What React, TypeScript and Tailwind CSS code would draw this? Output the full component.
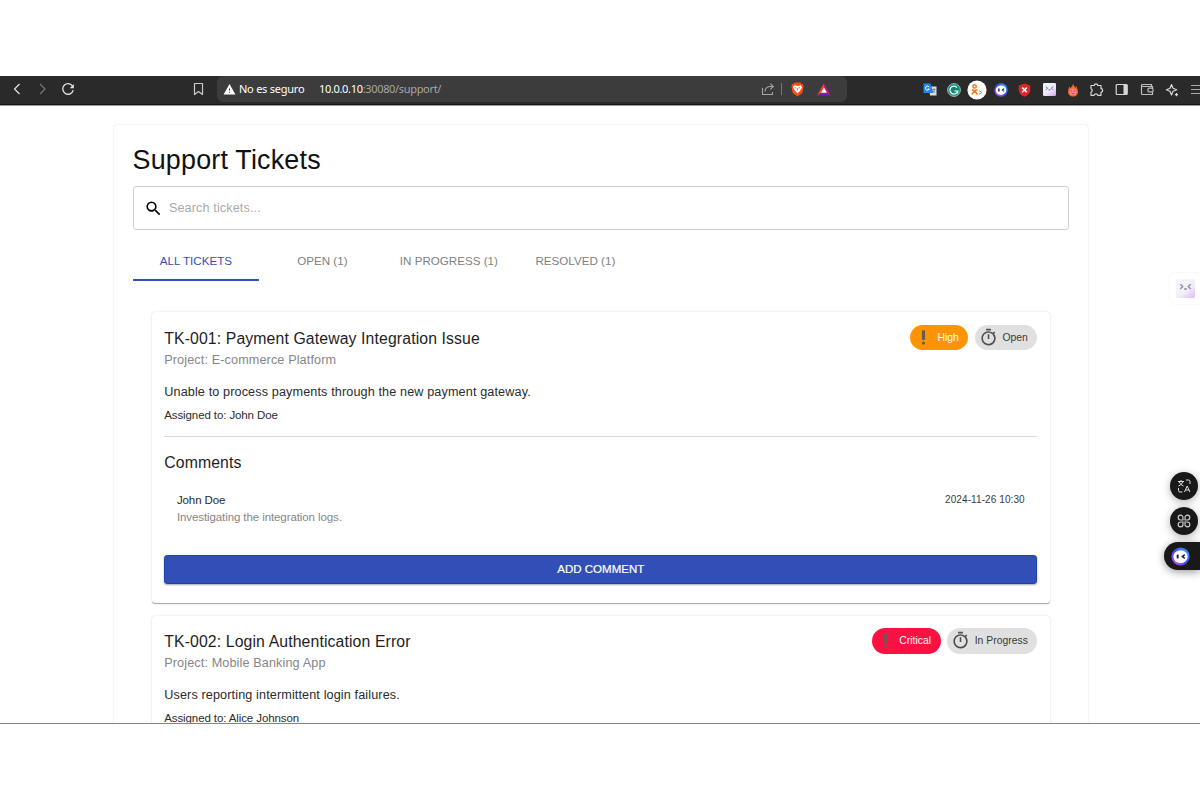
import type { ReactNode } from "react";
import { MdSearch, MdOutlineTimer, MdPriorityHigh, MdWarning } from "react-icons/md";

function Toolbar() {
  return (
    <header className="flex h-[29px] shrink-0 items-stretch overflow-hidden border-b border-[#151515] bg-[#2a2a2a] font-['Noto_Sans','Open_Sans',sans-serif] shadow-[0_1px_0_#999]">
      <div className="flex w-[217px] shrink-0 items-center pb-[2px] text-[#e4e4e4]">
        <svg className="ml-[13px] h-[14px] w-[9px]" viewBox="0 0 9 14" fill="none" stroke="currentColor" strokeWidth="1.2"><path d="M6.5 2 1.5 7l5 5" /></svg>
        <svg className="ml-[16px] h-[14px] w-[9px] text-[#777]" viewBox="0 0 9 14" fill="none" stroke="currentColor" strokeWidth="1.2"><path d="m2 2 5 5-5 5" /></svg>
        <svg className="ml-[14px] h-[14px] w-[14px]" viewBox="0 0 14 14" fill="none" stroke="currentColor" strokeWidth="1.3"><path d="M12.2 8.2A5.3 5.3 0 1 1 11.6 4.2" /><path d="M12.8 2v4.2H8.8" fill="currentColor" stroke="none" /></svg>
        <svg className="ml-[118px] h-[14px] w-[11px]" viewBox="0 0 11 14" fill="none" stroke="#c9c9c9" strokeWidth="1.2"><path d="M1.5 1.5h8v11l-4-3-4 3z" strokeLinejoin="round" /></svg>
      </div>
      <div className="mb-[2px] flex w-[630px] shrink-0 items-center rounded-md bg-[#3c3c3c] text-[11px] leading-[14px]">
        <MdWarning className="ml-[6px] size-[13px] shrink-0 text-white" />
        <span className="ml-[3px] w-[65px] whitespace-nowrap tracking-[-0.022em] text-white">No es seguro</span>
        <span className="ml-[15px] whitespace-nowrap tracking-[-0.03em] text-[#a6a6a6]"><span className="text-white">10.0.0.10</span>:30080/support/</span>
        <svg className="ml-auto h-[14px] w-[14px]" viewBox="0 0 14 14" fill="none" stroke="#a5a5a5" strokeWidth="1.1"><path d="M1.500 6v6.500h10V10M4 9.500c.2-3.300 2.300-5 5.500-5h2.500M9.300 1.700l3 2.800-3 2.800" /></svg>
        <span className="ml-[6px] h-[12px] w-px bg-[#777]" />
        <svg className="mt-px ml-[9px] h-[15px] w-[13px]" viewBox="0 0 13 15"><path d="M3.500.6h6l1.200 1.300 1.400.300.500 2.600-1.300 6.200L6.500 14.500 1.700 11 .4 4.800.9 2.200l1.400-.3z" fill="#fb4b14" /><path d="m3.200 3.200 3.300.7 3.300-.7 1.300 2.300-1.900 3-2.700 2.900-2.700-2.900-1.900-3z" fill="#fff" /><path d="m3.800 5.500 1.700.7M9.200 5.500l-1.700.7M6.500 6v2.500" stroke="#fb4b14" fill="none" strokeWidth=".8" /></svg>
        <svg className="mt-px mr-[16px] ml-[13px] h-[13px] w-[14px]" viewBox="0 0 14 13"><path d="M7 .5 0 12.500l7-4z" fill="#ff4724" /><path d="M7 .5 14 12.500l-7-4z" fill="#c21878" /><path d="M0 12.500h14l-4.500-3h-5z" fill="#70259f" /><path d="m7 4.500 2.900 5.200H4.100z" fill="#fff" /></svg>
      </div>
      <div className="ml-auto flex w-[277px] shrink-0 items-center pb-px text-[#d7d7d7]">
        <svg className="h-[14px] w-[14px] shrink-0" viewBox="0 0 14 14"><path d="M6 3.500h7.500v9H7z" fill="#d9dde1" /><path d="M.5.500h7l3 9.500H.5z" fill="#2585ee" /><path d="M6.200 4.100A2 2 0 1 0 6.300 6H4.700" stroke="#fff" fill="none" /><path d="M9.500 6.500h3M11 5.500v1m-1.500 3c1-.6 1.600-1.500 2-3m-1.200 1.200 1.700 2" stroke="#68717a" fill="none" strokeWidth=".8" /></svg>
        <svg className="ml-[10px] h-[14px] w-[14px] shrink-0" viewBox="0 0 14 14"><circle cx="7" cy="7" r="6.400" fill="#118a72" stroke="#d9e7e3" strokeWidth=".7" /><path d="M10 4.500a4 4 0 1 0 .8 3.500H7.500m3.200 0v2.500" stroke="#fff" strokeWidth="1.200" fill="none" /></svg>
        <svg className="ml-[6px] h-[20px] w-[20px] shrink-0" viewBox="0 0 20 20" fill="none" stroke="#f47b19" strokeWidth="1.500"><circle cx="10" cy="10" r="9.600" fill="#fff" stroke="none" /><circle cx="7.600" cy="6.400" r="1.700" /><path d="M4.800 9.700c1.800 1.200 3.800 1.200 5.600 0M7.600 10.800l-2.800 3.700m2.800-3.700 2.800 3.700" /><path d="m12 10.700 3 1.700-3 1.700" strokeWidth="1" /></svg>
        <BotFace className="ml-[7px] size-[14px]" />
        <svg className="ml-[10px] h-[14px] w-[13px] shrink-0" viewBox="0 0 13 14"><path d="m6.500.5 5.700 2v4.700c0 3-2.400 5.200-5.700 6.600C3.200 12.400.8 10.200.8 7.200V2.500z" fill="#e02524" /><path d="m4.200 4.600 4.600 4.600m0-4.600L4.200 9.200" stroke="#fff" strokeWidth="1.500" /></svg>
        <FaceTile className="ml-[11.500px] size-[13px]" />
        <svg className="ml-[11px] h-[14px] w-[12px] shrink-0" viewBox="0 0 12 14"><path d="M6 .5C6.500 3 8 3 8 5l1.500-2c0 2 1.500 3.500 1.500 6 0 2.500-2 4.500-5 4.500S1 11.500 1 9c0-2 1-3.300 1-5.500L3.500 5C4.500 4 5.800 3 6 .5" fill="#f36b24" /><circle cx="6" cy="9" r="3.300" fill="#ff8795" /><path d="M3.500 8h1.800m1.400 0h1.800M4.500 10.300q1.500 1 3 0" stroke="#a32d45" fill="none" strokeWidth=".8" /></svg>
        <svg className="ml-[10px] h-[15px] w-[15px] shrink-0" viewBox="0 0 15 15" fill="none" stroke="currentColor" strokeWidth="1.200" strokeLinejoin="round"><path d="M2 3.500h3.300a1.700 1.700 0 1 1 3.400 0H12v3.200a1.700 1.700 0 1 1 0 3.400v3.200H8.900a2 2 0 0 0-3.800 0H2v-3.200a1.800 1.800 0 0 0 0-3.400z" /></svg>
        <svg className="ml-[11px] h-[13px] w-[14px] shrink-0" viewBox="0 0 14 13"><rect x="1.200" y="1.500" width="11" height="10" rx="1" fill="none" stroke="currentColor" strokeWidth="1.200" /><path d="M8.500 1.500h3.700v10H8.500z" fill="currentColor" /></svg>
        <svg className="ml-[11px] h-[13px] w-[14px] shrink-0" viewBox="0 0 14 13" fill="none" stroke="#bdbdbd" strokeWidth="1.200"><path d="M12.500 5V3.500H2.500a1 1 0 0 1 0-2h9v2M1.500 2.500v8a1 1 0 0 0 1 1h10V9" /><rect x="8" y="5.200" width="5" height="3.700" rx="1" /></svg>
        <svg className="ml-[11px] h-[14px] w-[14px] shrink-0" viewBox="0 0 14 14" fill="none" stroke="currentColor" strokeWidth="1.200"><path d="M6.500 1.500 8 5.200l3.700 1.500L8 8.200l-1.500 3.700L5 8.200 1.300 6.700 5 5.200zM11.500 10v3.200m-1.600-1.600h3.200" strokeLinejoin="round" /></svg>
        <svg className="ml-[11px] h-[13px] w-[10px] shrink-0" viewBox="0 0 10 13" stroke="#aaa" strokeWidth="1.200"><path d="M1 2.500h9M1 6.500h9M1 10.500h9" /></svg>
      </div>
    </header>
  );
}

function BotFace({ className }: { className: string }) {
  return (
    <svg className={`shrink-0 ${className}`} viewBox="0 0 20 20">
      <defs><linearGradient id="botRing" x1="0" y1="1" x2="1" y2="0"><stop stopColor="#d44cf4" /><stop offset=".5" stopColor="#394af7" /><stop offset="1" stopColor="#3bb5ff" /></linearGradient></defs>
      <circle cx="10" cy="10" r="9.500" fill="url(#botRing)" />
      <ellipse cx="10" cy="10.200" rx="7.500" ry="6.800" fill="#fff" />
      <path d="M7 8v4" stroke="#171733" strokeWidth="2" />
      <path d="m14.500 8-2.500 2 2.500 2" fill="none" stroke="#171733" strokeWidth="1.600" />
    </svg>
  );
}

function FaceTile({ className }: { className: string }) {
  return (
    <svg className={`shrink-0 ${className}`} viewBox="0 0 20 20">
      <defs><linearGradient id="tileFill" x1=".2" y1="0" x2="1" y2="1"><stop stopColor="#f1f5fb" /><stop offset=".55" stopColor="#ece7fa" /><stop offset="1" stopColor="#d59af0" /></linearGradient></defs>
      <rect width="20" height="20" rx="2" fill="url(#tileFill)" />
      <path d="m4.500 5.500 2.500 2.500-2.500 2.500M15.500 5.500 13 8l2.500 2.500M8.500 10.500h3" fill="none" stroke="#60616e" strokeWidth="1.500" />
    </svg>
  );
}

function Chip({ tone, icon, children }: { tone: string; icon: ReactNode; children: ReactNode }) {
  return (
    <span className={`flex h-[25.300px] items-center whitespace-nowrap rounded-full pr-[9.500px] pl-[4px] text-[10.400px] ${tone}`}>
      {icon}
      <span className="ml-[4.800px]">{children}</span>
    </span>
  );
}

type TicketProps = {
  title: string;
  project: string;
  text: string;
  assignee: string;
  priority: string;
  priorityTone: string;
  markTone: string;
  status: string;
  children?: ReactNode;
};

function Ticket(p: TicketProps) {
  return (
    <article className="mb-[12.650px] rounded-[3.200px] bg-white px-[12.650px] pt-[12.650px] pb-[18.900px] shadow-[0_1.600px_0.800px_-0.800px_rgba(0,0,0,0.2),0_0.800px_0.800px_rgba(0,0,0,0.12),0_0.800px_2.400px_rgba(0,0,0,0.1)]">
      <div className="flex items-start justify-between">
        <div className="pt-[0.500px]">
          <h2 className="text-[15.810px] leading-[25.300px] tracking-[0.0075em]">{p.title}</h2>
          <p className="text-[12.650px] leading-[19.200px] tracking-[0.00938em] text-[#868686]">{p.project}</p>
        </div>
        <div className="flex gap-[6.300px]">
          <Chip tone={p.priorityTone} icon={<MdPriorityHigh className={`size-[19px] ${p.markTone}`} />}>{p.priority}</Chip>
          <Chip tone="bg-[#e0e0e0] text-[#3a3a3a]" icon={<MdOutlineTimer className="size-[19px] text-[#4d4d4d]" />}>{p.status}</Chip>
        </div>
      </div>
      <p className="mt-[12.600px] text-[12.650px] leading-[19px] tracking-[0.00938em] text-[#2b2b2b]">{p.text}</p>
      <p className="mt-[6.200px] text-[11.500px] leading-[15.800px] tracking-[-0.009em] text-[#2b2b2b]">Assigned to: {p.assignee}</p>
      {p.children}
    </article>
  );
}

export default function App() {
  const tabs = ["OPEN (1)", "IN PROGRESS (1)", "RESOLVED (1)"];
  return (
    <div className="h-[800px] w-[1200px] overflow-hidden bg-white pt-[76px] font-['Liberation_Sans',Arial,sans-serif] text-[#1e1e1e]">
      <div className="relative flex h-[648px] flex-col overflow-hidden border-b border-[#858585]">
        <Toolbar />
        <main className="ml-[113.600px] mt-[19.600px] w-[974.400px] shrink-0 rounded-[3.200px] bg-white px-[19px] pt-[19px] shadow-[0_0.800px_0.800px_rgba(0,0,0,0.1),0_0.800px_2.400px_rgba(0,0,0,0.1)]">
          <h1 className="text-[26.880px] leading-[33.200px] tracking-[0.00735em] text-[#111]">Support Tickets</h1>
          <label className="mt-[9.100px] flex h-[44.500px] items-center rounded-[3.200px] border border-[#cecece] pl-[10px]">
            <MdSearch className="size-[19px] text-black" />
            <input className="ml-[6.300px] min-w-0 flex-1 bg-transparent text-[12.650px] tracking-[0.00938em] outline-none placeholder:text-[#aaa]" placeholder="Search tickets..." />
          </label>
          <nav className="mt-[12.200px] flex h-[38px] text-[11.600px] tracking-[0.001em] text-[#808080]">
            <span className="flex w-[126.500px] items-center justify-center border-b-2 border-[#324fb8] pt-[1px] text-[#324fb8]">ALL TICKETS</span>
            {tabs.map((tab) => (
              <span key={tab} className="flex w-[126.500px] items-center justify-center pb-px">{tab}</span>
            ))}
          </nav>
          <section className="px-[19px] pt-[31.900px]">
            <Ticket title="TK-001: Payment Gateway Integration Issue" project="Project: E-commerce Platform" text="Unable to process payments through the new payment gateway." assignee="John Doe" priority="High" priorityTone="bg-[#ff9303] text-white" markTone="text-[#615f53]" status="Open">
              <hr className="mt-[12.300px] border-[#dadada]" />
              <h3 className="mt-[13px] text-[15.810px] leading-[25.300px] tracking-[0.0075em]">Comments</h3>
              <div className="mt-[16.500px] flex justify-between px-[12.650px]">
                <div className="text-[11.500px] leading-[17.300px] tracking-[-0.008em] text-[#2b2b2b]">
                  <p>John Doe</p>
                  <p className="text-[#868686]">Investigating the integration logs.</p>
                </div>
                <time className="text-[10px] leading-[16.900px] tracking-[0.009em] text-[#3a3a3a]">2024-11-26 10:30</time>
              </div>
              <button className="mt-[28.800px] flex h-[29px] w-full items-center justify-center rounded-[3.200px] border border-[#1f40b1] bg-[#324fb8] text-[11.500px] font-medium tracking-[0.001em] text-white shadow-[0_1px_2px_rgba(0,0,0,0.35)] [-webkit-text-stroke:0.2px_white]">ADD COMMENT</button>
            </Ticket>
            <Ticket title="TK-002: Login Authentication Error" project="Project: Mobile Banking App" text="Users reporting intermittent login failures." assignee="Alice Johnson" priority="Critical" priorityTone="bg-[#ff1043] text-white" markTone="text-[#73545a]" status="In Progress" />
          </section>
        </main>

        <div className="absolute top-[197px] right-0 flex h-[31px] w-[30px] items-center rounded-l-md bg-white pl-[6px] shadow-[0_0_3px_rgba(0,0,0,0.08)]">
          <FaceTile className="size-[19px] opacity-70" />
        </div>
        <div className="absolute top-[396px] right-0 flex flex-col items-end gap-[7px]">
          <span className="mr-[2px] flex size-[28px] items-center justify-center rounded-full bg-[#191919] shadow-[0_2px_9px_rgba(0,0,0,0.3)]">
            <svg className="size-[14px]" viewBox="0 0 14 14" fill="none" stroke="#ddd" strokeWidth="1"><path d="M1 2.500h6M4 1v1.500M1.500 7C4 6 5.300 4.500 5.800 2.500M2.200 2.800C3 4.800 4.500 6 6.500 7M7.500 13l2.700-6 2.700 6M8.400 11h3.600M9 1h2.500a1.500 1.500 0 0 1 1.500 1.500V5M1.500 9v2.500A1.500 1.500 0 0 0 3 13h2.500" /></svg>
          </span>
          <span className="mr-[2px] flex size-[28px] items-center justify-center rounded-full bg-[#191919] shadow-[0_2px_9px_rgba(0,0,0,0.3)]">
            <svg className="size-[14px]" viewBox="0 0 14 14" fill="none" stroke="#ccc" strokeWidth="1.200"><path d="M6 6V3.600A2.400 2.400 0 1 0 3.600 6zM8 6V3.600A2.400 2.400 0 1 1 10.400 6zM6 8v2.400A2.400 2.400 0 1 1 3.600 8zM8 8v2.400A2.400 2.400 0 1 0 10.400 8z" /></svg>
          </span>
          <span className="flex h-[28px] w-[36px] items-center rounded-l-full bg-[#191919] pl-[7px] shadow-[0_2px_9px_rgba(0,0,0,0.4)]">
            <BotFace className="size-[19px]" />
          </span>
        </div>
      </div>
    </div>
  );
}
